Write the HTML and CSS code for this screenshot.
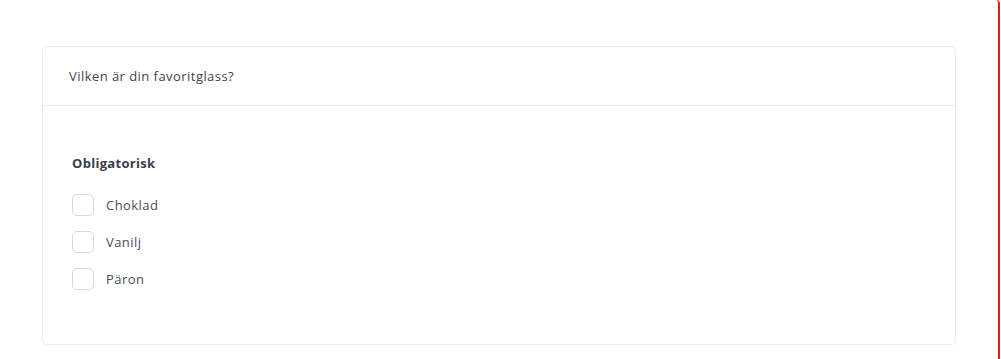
FILE: index.html
```html
<!DOCTYPE html>
<html lang="sv">
<head>
    <meta charset="UTF-8">
    <meta name="viewport" content="width=device-width, initial-scale=1.0">
    <title>Favoritglass</title>
    <link rel="stylesheet" href="styles.css">
</head>
<body>
    <div class="page">
        <div class="question-card">
            <div class="question-header">Vilken är din favoritglass?</div>
            <div class="question-body">
                <div class="required-label">Obligatorisk</div>
                <div class="options">
                    <label class="option"><span class="checkbox"></span>Choklad</label>
                    <label class="option"><span class="checkbox"></span>Vanilj</label>
                    <label class="option"><span class="checkbox"></span>Päron</label>
                </div>
            </div>
        </div>
    </div>
</body>
</html>
```

FILE: styles.css
```css
html, body {
    margin: 0;
    padding: 0;
    background-color: #ffffff;
}
body {
    font-family: 'Open Sans', 'Noto Sans', sans-serif;
    color: #45475a;
    letter-spacing: 0.45px;
}
.page {
    width: 1000px;
    height: 359px;
    box-sizing: border-box;
    border-right: 2px solid #e31b1b;
    border-top-right-radius: 4px;
    padding: 46px 0 0 42px;
}
.question-card {
    width: 914px;
    height: 299px;
    box-sizing: border-box;
    border: 1px solid #ececec;
    border-radius: 5px;
    background-color: #ffffff;
}
.question-header {
    height: 59px;
    box-sizing: border-box;
    padding: 0 26px;
    display: flex;
    align-items: center;
    font-size: 13px;
    color: #3f4152;
    border-bottom: 1px solid #ececec;
}
.question-body {
    padding: 47px 29px 0 29px;
}
.required-label {
    font-size: 13px;
    font-weight: 700;
    line-height: 20px;
    color: #3a3c4c;
    letter-spacing: 0.3px;
}
.options {
    margin-top: 21px;
    display: flex;
    flex-direction: column;
    gap: 15px;
}
.option {
    display: flex;
    align-items: center;
    gap: 12px;
    font-size: 13px;
    color: #4a4c5c;
    height: 22px;
}
.checkbox {
    width: 22px;
    height: 22px;
    box-sizing: border-box;
    border: 1px solid #d8d8d8;
    border-radius: 5px;
    background-color: #ffffff;
}
```
